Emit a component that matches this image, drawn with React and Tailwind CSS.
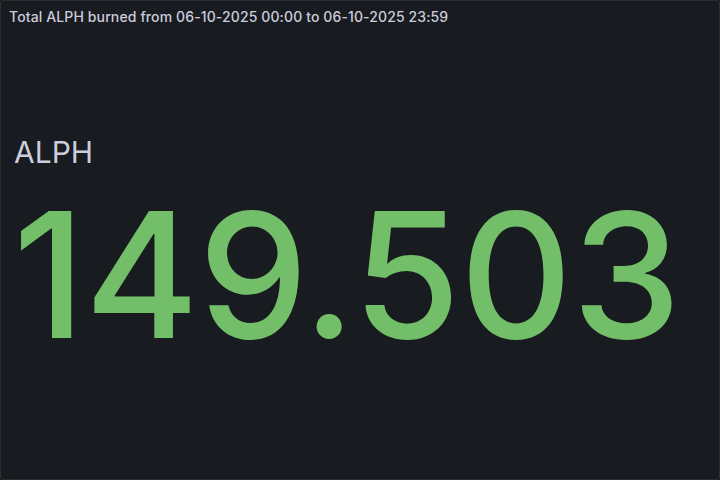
export default function App() {
  return (
    <div
      className="w-[720px] h-[480px] bg-[#111217] text-[#ccccdc]"
      style={{ fontFamily: "Inter, 'Liberation Sans', sans-serif" }}
    >
      <div className="w-full h-full flex flex-col bg-[#181b1f] border border-[#2c2e33] rounded-[2px] overflow-hidden">
        <div className="h-8 flex items-center pl-2 shrink-0">
          <h2 className="text-[14px] font-medium leading-[22px] text-[#ccccdc] tracking-[0.12px]">
            Total ALPH burned from 06-10-2025 00:00 to 06-10-2025 23:59
          </h2>
        </div>
        <div className="flex-1 flex flex-col pl-3 pt-[101px]">
          <div className="text-[30px] leading-[36px] text-[#ccccdc] font-normal pl-[1px]">ALPH</div>
          <div className="mt-[18px] text-[174px] leading-[174px] font-medium text-[#73bf69] tracking-[-0.5px]">
            149.503
          </div>
        </div>
      </div>
    </div>
  );
}
